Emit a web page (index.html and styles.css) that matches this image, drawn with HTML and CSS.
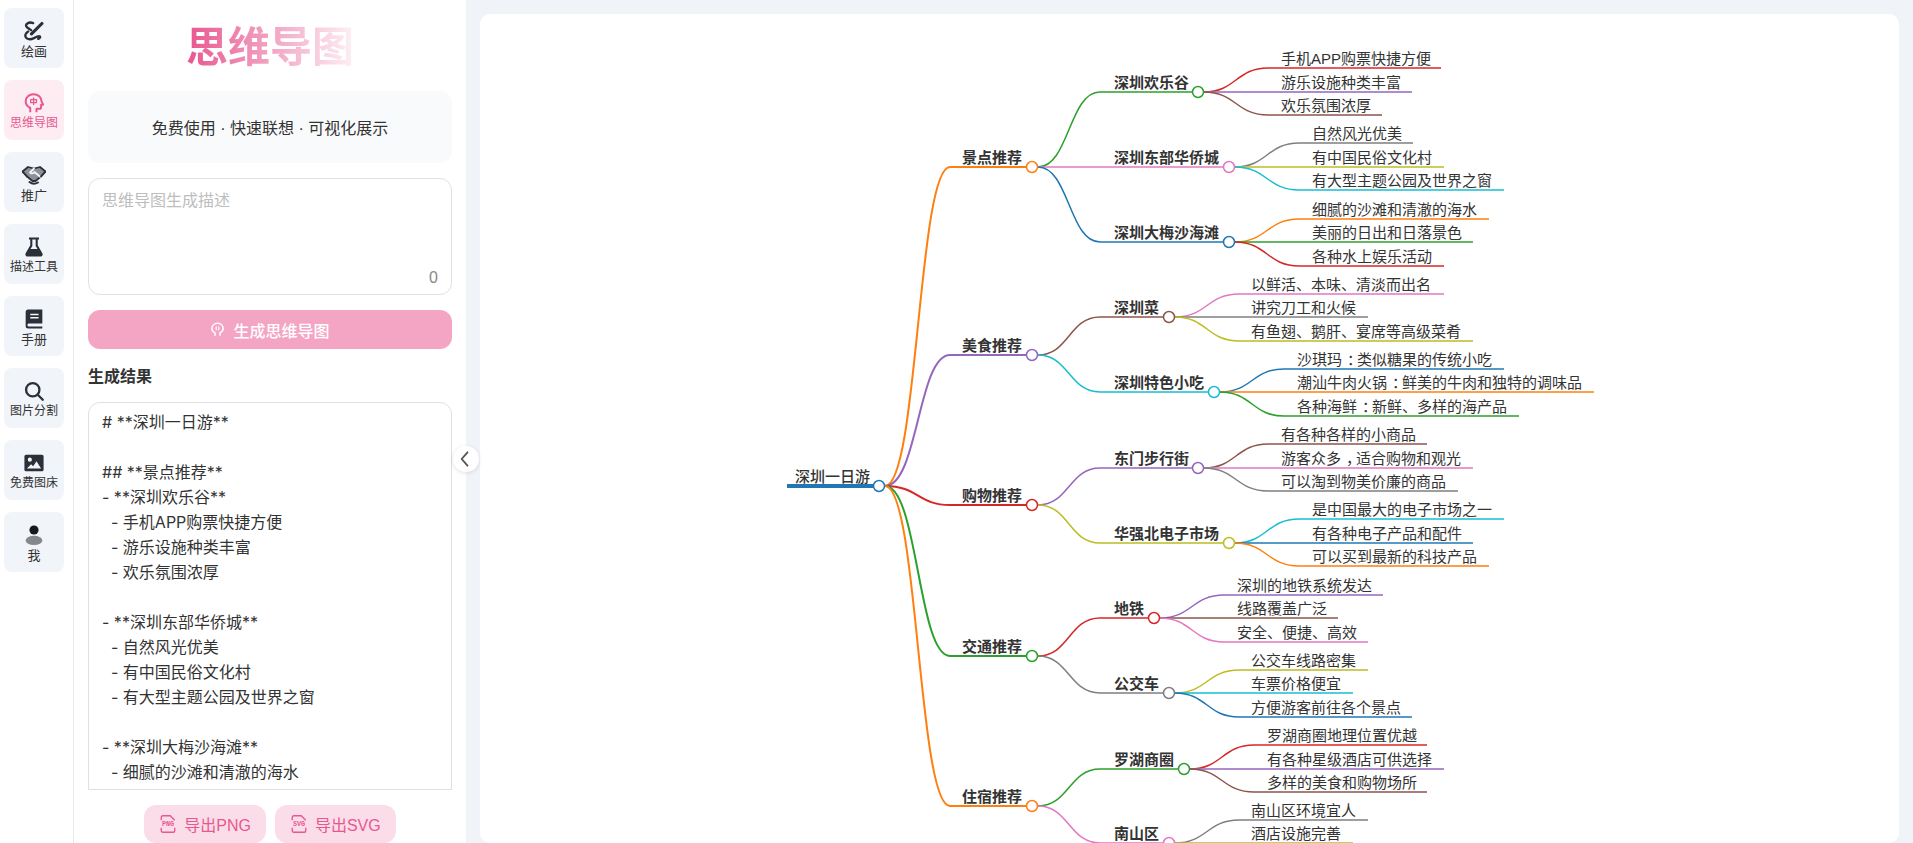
FILE: index.html
```html
<!DOCTYPE html>
<html lang="zh">
<head>
  <meta charset="utf-8">
  <title>思维导图</title>
  <link rel="stylesheet" href="styles.css">
</head>
<body>
  <nav class="nav">
    <a class="nav-item">
      <svg class="nav-icon" viewBox="0 0 24 24" fill="none" stroke="#2b2f38" stroke-width="2.8" stroke-linecap="round">
        <path d="M11 2.500C6 .5 0 4 3.500 7.500l5 3.500"/>
        <path d="M21.500 3L9 15.500" stroke-width="3.8"/>
        <path d="M5 12.500c-3.500 2-4.500 6-2 8s6 1.500 9 0 6-3 7-2-.5 2.500-2 3"/>
      </svg>
      <span class="nav-label">绘画</span>
    </a>
    <a class="nav-item active">
      <svg class="nav-icon" viewBox="0 0 24 24" fill="none" stroke="#e8578f" stroke-width="2.4" stroke-linejoin="round">
        <path d="M7.500 23v-5C4.500 16.500 2 14 2 10 2 5 6 1.500 11.500 1.500S21 5 21 10l2 4h-2.500v3a2 2 0 0 1-2 2H15v4"/>
        <path d="M11.500 5.500v9M8 8h7v3.500H8z" stroke-width="1.5"/>
      </svg>
      <span class="nav-label small">思维导图</span>
    </a>
    <a class="nav-item">
      <svg class="nav-icon wide" viewBox="0 2 24 20" fill="none" stroke="#2b2f38" stroke-width="1.8" stroke-linejoin="round" stroke-linecap="round">
        <path d="M.5 8.500L6 4l6 1.500L18 4l5.500 4.500L19 13.500 13.500 18h-3L5 13.500z" fill="#8d9096"/>
        <path d="M12 5.500L8 9.500c1.500 1.500 3.500 1 4.500-.5l6 5" stroke="#f1f4f9"/>
        <path d="M.5 8.500l4.500 5M23.500 8.500L19 13.500"/>
        <path d="M7.500 19c2.500 2 6 2 8.500.5" stroke-width="2"/>
      </svg>
      <span class="nav-label">推广</span>
    </a>
    <a class="nav-item">
      <svg class="nav-icon" viewBox="0 0 24 24">
        <path fill="#2b2f38" d="M6 .5h12V3h-1.500v7L22 19.500c1 2-.3 4-2.500 4h-15C2.300 23.500 1 21.500 2 19.500L7.500 10V3H6zM10 3v7.700L7.800 14.500h8.400L14 10.700V3z"/>
      </svg>
      <span class="nav-label small">描述工具</span>
    </a>
    <a class="nav-item">
      <svg class="nav-icon" viewBox="0 0 24 24">
        <path fill="#2b2f38" d="M5 .5h17v17H5.500a1.800 1.800 0 0 0 0 3.500H22v2.500H5a3 3 0 0 1-3-3v-17a3 3 0 0 1 3-3z"/>
        <path stroke="#f1f4f9" stroke-width="1.8" d="M7.500 6.500h10M7.500 10.500h10"/>
      </svg>
      <span class="nav-label">手册</span>
    </a>
    <a class="nav-item">
      <svg class="nav-icon" viewBox="0 0 24 24" fill="none" stroke="#2b2f38" stroke-width="2.8" stroke-linecap="round">
        <circle cx="10.500" cy="10.500" r="8"/>
        <path d="M16.500 16.500l6 6"/>
      </svg>
      <span class="nav-label small">图片分割</span>
    </a>
    <a class="nav-item">
      <svg class="nav-icon" viewBox="0 0 24 24">
        <path fill="#2b2f38" fill-rule="evenodd" d="M2.500 2h19a2 2 0 0 1 2 2v16a2 2 0 0 1-2 2h-19a2 2 0 0 1-2-2V4a2 2 0 0 1 2-2zM7 5.500a2.500 2.500 0 1 0 0 5 2.500 2.500 0 0 0 0-5zM3.500 18.500h17L15 10l-4 6-2.500-2.500z"/>
      </svg>
      <span class="nav-label small">免费图床</span>
    </a>
    <a class="nav-item">
      <svg class="nav-icon" viewBox="0 0 24 24">
        <circle cx="12" cy="6" r="5.5" fill="#17191e"/>
        <ellipse cx="12" cy="18.500" rx="10" ry="5.500" fill="#85878c"/>
      </svg>
      <span class="nav-label">我</span>
    </a>
  </nav>

  <aside class="panel">
    <h1 class="title"><span>思维导图</span></h1>
    <div class="tagline">免费使用 · 快速联想 · 可视化展示</div>

    <div class="prompt">
      <textarea class="prompt-input" placeholder="思维导图生成描述"></textarea>
      <span class="prompt-count">0</span>
    </div>

    <button class="generate">
      <svg class="generate-icon" viewBox="0 0 24 24" fill="none" stroke="#fff" stroke-width="2.4" stroke-linejoin="round">
        <path d="M8 22v-4.500C5 16 3 13.500 3 10.500 3 5.500 7 2 12 2s9 3.500 9 8.500c0 3-2 5.500-5 7V22"/>
        <path d="M10 7v6M14 7v6" stroke-width="1.8"/>
      </svg>
      <span>生成思维导图</span>
    </button>

    <h2 class="result-title">生成结果</h2>
    <div class="result"># **深圳一日游**

## **景点推荐**
- **深圳欢乐谷**
  - 手机APP购票快捷方便
  - 游乐设施种类丰富
  - 欢乐氛围浓厚

- **深圳东部华侨城**
  - 自然风光优美
  - 有中国民俗文化村
  - 有大型主题公园及世界之窗

- **深圳大梅沙海滩**
  - 细腻的沙滩和清澈的海水
  - 美丽的日出和日落景色</div>

    <div class="export">
      <button class="export-btn">
        <svg class="export-icon" viewBox="0 0 24 24" fill="none" stroke="#e8578f" stroke-width="1.8">
          <path d="M3 7V3a2 2 0 0 1 2-2h10l6 6M21 17v4a2 2 0 0 1-2 2H5a2 2 0 0 1-2-2v-4"/>
          <text class="export-icon-text" x="12" y="15">PNG</text>
        </svg>
        <span>导出PNG</span>
      </button>
      <button class="export-btn">
        <svg class="export-icon" viewBox="0 0 24 24" fill="none" stroke="#e8578f" stroke-width="1.8">
          <path d="M3 7V3a2 2 0 0 1 2-2h10l6 6M21 17v4a2 2 0 0 1-2 2H5a2 2 0 0 1-2-2v-4"/>
          <text class="export-icon-text" x="12" y="15">SVG</text>
        </svg>
        <span>导出SVG</span>
      </button>
    </div>

    <button class="collapse">
      <svg viewBox="0 0 24 24" width="20" height="20" fill="none" stroke="#555" stroke-width="2.2" stroke-linecap="round" stroke-linejoin="round">
        <path d="M15 4l-7 8 7 8"/>
      </svg>
    </button>
  </aside>

  <main class="main">
    <div class="canvas">
      <!-- viewBox uses page coordinates, canvas starts at 480,14 -->
      <svg class="mindmap" viewBox="480 14 1419 829" width="1419" height="829">
        <g class="links">
          <path class="s-blue root-line" d="M787 486H875"/>

          <path class="s-orange thick" d="M885 486C918 486 918 167 950 167H1026"/>
          <path class="s-purple thick" d="M885 486C918 486 918 355 950 355H1026"/>
          <path class="s-red thick" d="M885 486C918 486 918 505 950 505H1026"/>
          <path class="s-green thick" d="M885 486C918 486 918 656 950 656H1026"/>
          <path class="s-orange thick" d="M885 486C918 486 918 806 950 806H1026"/>

          <path class="s-green" d="M1038 167C1069 167 1069 92 1100 92H1192"/>
          <path class="s-pink" d="M1038 167H1223"/>
          <path class="s-blue" d="M1038 167C1069 167 1069 242 1100 242H1223"/>
          <path class="s-brown" d="M1038 355C1069 355 1069 317 1100 317H1163"/>
          <path class="s-cyan" d="M1038 355C1069 355 1069 392 1100 392H1208"/>
          <path class="s-purple" d="M1038 505C1069 505 1069 468 1100 468H1192"/>
          <path class="s-olive" d="M1038 505C1069 505 1069 543 1100 543H1223"/>
          <path class="s-red" d="M1038 656C1069 656 1069 618 1100 618H1148"/>
          <path class="s-gray" d="M1038 656C1069 656 1069 693 1100 693H1163"/>
          <path class="s-green" d="M1038 806C1069 806 1069 769 1100 769H1178"/>
          <path class="s-pink" d="M1038 806C1069 806 1069 843 1100 843H1163"/>

          <path class="s-red" d="M1204 92C1236 92 1236 68 1268 68H1441"/>
          <path class="s-purple" d="M1204 92H1412"/>
          <path class="s-brown" d="M1204 92C1236 92 1236 115 1268 115H1382"/>

          <path class="s-gray" d="M1235 167C1267 167 1267 143 1299 143H1413"/>
          <path class="s-olive" d="M1235 167H1444"/>
          <path class="s-cyan" d="M1235 167C1267 167 1267 190 1299 190H1504"/>

          <path class="s-orange" d="M1235 242C1267 242 1267 219 1299 219H1489"/>
          <path class="s-green" d="M1235 242H1473"/>
          <path class="s-red" d="M1235 242C1267 242 1267 266 1299 266H1444"/>

          <path class="s-pink" d="M1175 317C1207 317 1207 294 1239 294H1444"/>
          <path class="s-gray" d="M1175 317H1368"/>
          <path class="s-olive" d="M1175 317C1207 317 1207 341 1239 341H1473"/>

          <path class="s-blue" d="M1220 392C1252 392 1252 369 1284 369H1504"/>
          <path class="s-orange" d="M1220 392H1594"/>
          <path class="s-green" d="M1220 392C1252 392 1252 416 1284 416H1519"/>

          <path class="s-brown" d="M1204 468C1236 468 1236 444 1268 444H1427"/>
          <path class="s-pink" d="M1204 468H1473"/>
          <path class="s-gray" d="M1204 468C1236 468 1236 491 1268 491H1458"/>

          <path class="s-cyan" d="M1235 543C1267 543 1267 519 1299 519H1504"/>
          <path class="s-blue" d="M1235 543H1473"/>
          <path class="s-orange" d="M1235 543C1267 543 1267 566 1299 566H1489"/>

          <path class="s-purple" d="M1160 618C1192 618 1192 595 1224 595H1383"/>
          <path class="s-brown" d="M1160 618H1338"/>
          <path class="s-pink" d="M1160 618C1192 618 1192 642 1224 642H1368"/>

          <path class="s-olive" d="M1175 693C1207 693 1207 670 1239 670H1368"/>
          <path class="s-cyan" d="M1175 693H1353"/>
          <path class="s-blue" d="M1175 693C1207 693 1207 717 1239 717H1412"/>

          <path class="s-red" d="M1190 769C1222 769 1222 745 1254 745H1427"/>
          <path class="s-purple" d="M1190 769H1444"/>
          <path class="s-brown" d="M1190 769C1222 769 1222 792 1254 792H1427"/>

          <path class="s-gray" d="M1175 843C1207 843 1207 820 1239 820H1368"/>
          <path class="s-olive" d="M1175 843H1353"/>
        </g>

        <g class="dots">
          <circle class="s-blue" cx="879" cy="486" r="5.5"/>
          <circle class="s-orange" cx="1032" cy="167" r="5.5"/>
          <circle class="s-purple" cx="1032" cy="355" r="5.5"/>
          <circle class="s-red" cx="1032" cy="505" r="5.5"/>
          <circle class="s-green" cx="1032" cy="656" r="5.5"/>
          <circle class="s-orange" cx="1032" cy="806" r="5.5"/>
          <circle class="s-green" cx="1198" cy="92" r="5.5"/>
          <circle class="s-pink" cx="1229" cy="167" r="5.5"/>
          <circle class="s-blue" cx="1229" cy="242" r="5.5"/>
          <circle class="s-brown" cx="1169" cy="317" r="5.5"/>
          <circle class="s-cyan" cx="1214" cy="392" r="5.5"/>
          <circle class="s-purple" cx="1198" cy="468" r="5.5"/>
          <circle class="s-olive" cx="1229" cy="543" r="5.5"/>
          <circle class="s-red" cx="1154" cy="618" r="5.5"/>
          <circle class="s-gray" cx="1169" cy="693" r="5.5"/>
          <circle class="s-green" cx="1184" cy="769" r="5.5"/>
          <circle class="s-pink" cx="1169" cy="843" r="5.5"/>
        </g>

        <g class="labels">
          <text class="root-label" x="795" y="482">深圳一日游</text>
        </g>

        <g class="labels strong">
          <text x="962" y="163">景点推荐</text>
          <text x="962" y="351">美食推荐</text>
          <text x="962" y="501">购物推荐</text>
          <text x="962" y="652">交通推荐</text>
          <text x="962" y="802">住宿推荐</text>
          <text x="1114" y="88">深圳欢乐谷</text>
          <text x="1114" y="163">深圳东部华侨城</text>
          <text x="1114" y="238">深圳大梅沙海滩</text>
          <text x="1114" y="313">深圳菜</text>
          <text x="1114" y="388">深圳特色小吃</text>
          <text x="1114" y="464">东门步行街</text>
          <text x="1114" y="539">华强北电子市场</text>
          <text x="1114" y="614">地铁</text>
          <text x="1114" y="689">公交车</text>
          <text x="1114" y="765">罗湖商圈</text>
          <text x="1114" y="839">南山区</text>
        </g>

        <g class="labels">
          <text x="1281" y="64">手机APP购票快捷方便</text>
          <text x="1281" y="88">游乐设施种类丰富</text>
          <text x="1281" y="111">欢乐氛围浓厚</text>
          <text x="1312" y="139">自然风光优美</text>
          <text x="1312" y="163">有中国民俗文化村</text>
          <text x="1312" y="186">有大型主题公园及世界之窗</text>
          <text x="1312" y="215">细腻的沙滩和清澈的海水</text>
          <text x="1312" y="238">美丽的日出和日落景色</text>
          <text x="1312" y="262">各种水上娱乐活动</text>
          <text x="1251" y="290">以鲜活、本味、清淡而出名</text>
          <text x="1251" y="313">讲究刀工和火候</text>
          <text x="1251" y="337">有鱼翅、鹅肝、宴席等高级菜肴</text>
          <text x="1297" y="365">沙琪玛<tspan dx="5">：</tspan><tspan dx="-5">类似糖果的传统小吃</tspan></text>
          <text x="1297" y="388">潮汕牛肉火锅<tspan dx="5">：</tspan><tspan dx="-5">鲜美的牛肉和独特的调味品</tspan></text>
          <text x="1297" y="412">各种海鲜<tspan dx="5">：</tspan><tspan dx="-5">新鲜、多样的海产品</tspan></text>
          <text x="1281" y="440">有各种各样的小商品</text>
          <text x="1281" y="464">游客众多<tspan dx="5">，</tspan><tspan dx="-5">适合购物和观光</tspan></text>
          <text x="1281" y="487">可以淘到物美价廉的商品</text>
          <text x="1312" y="515">是中国最大的电子市场之一</text>
          <text x="1312" y="539">有各种电子产品和配件</text>
          <text x="1312" y="562">可以买到最新的科技产品</text>
          <text x="1237" y="591">深圳的地铁系统发达</text>
          <text x="1237" y="614">线路覆盖广泛</text>
          <text x="1237" y="638">安全、便捷、高效</text>
          <text x="1251" y="666">公交车线路密集</text>
          <text x="1251" y="689">车票价格便宜</text>
          <text x="1251" y="713">方便游客前往各个景点</text>
          <text x="1267" y="741">罗湖商圈地理位置优越</text>
          <text x="1267" y="765">有各种星级酒店可供选择</text>
          <text x="1267" y="788">多样的美食和购物场所</text>
          <text x="1251" y="816">南山区环境宜人</text>
          <text x="1251" y="839">酒店设施完善</text>
        </g>
      </svg>
    </div>
  </main>
</body>
</html>
```

FILE: styles.css
```css
* { box-sizing: border-box; }

html, body {
  height: 100%;
  margin: 0;
}
body {
  display: flex;
  overflow: hidden;
  background: #f0f4f9;
  color: #333;
  font-family: "Liberation Sans", "Noto Sans CJK SC", sans-serif;
}

/* left icon rail */
.nav {
  flex: 0 0 74px;
  display: flex;
  flex-direction: column;
  gap: 12px;
  padding: 8px 4px;
  background: #fff;
  border-right: 1px solid #e6e8ec;
}
.nav-item {
  width: 60px;
  height: 60px;
  display: flex;
  flex-direction: column;
  align-items: center;
  justify-content: center;
  gap: 2px;
  padding-top: 4px;
  border-radius: 8px;
  background: #f1f4f9;
  color: #333;
}
.nav-item.active {
  background: #fdedf3;
  color: #e8578f;
}
.nav-icon {
  width: 20px;
  height: 20px;
}
.nav-icon.wide { width: 24px; }
.nav-label {
  font-size: 13px;
  line-height: 17px;
}
.nav-label.small { font-size: 12px; }

/* generator panel */
.panel {
  position: relative;
  flex: 0 0 392px;
  display: flex;
  flex-direction: column;
  padding: 0 14px;
  background: #fff;
}
.title {
  margin: 19px 0 14px;
  height: 58px;
  font-size: 42px;
  line-height: 58px;
  font-weight: 700;
  text-align: center;
}
.title span {
  background: linear-gradient(90deg, #e8568f, #fdf0f5);
  -webkit-background-clip: text;
  background-clip: text;
  color: transparent;
}
.tagline {
  height: 72px;
  border-radius: 12px;
  background: #f9fafc;
  font-size: 16px;
  line-height: 76px;
  text-align: center;
}
.prompt {
  position: relative;
  height: 117px;
  margin-top: 15px;
}
.prompt-input {
  display: block;
  width: 100%;
  height: 100%;
  padding: 11px 13px;
  resize: none;
  border: 1px solid #e0e2e6;
  border-radius: 12px;
  outline: none;
  font: inherit;
  font-size: 16px;
  line-height: 22px;
}
.prompt-input::placeholder { color: #bdbdbd; }
.prompt-count {
  position: absolute;
  right: 14px;
  bottom: 8px;
  color: #888;
  font-size: 16px;
}
.generate {
  height: 39px;
  margin-top: 15px;
  display: flex;
  align-items: center;
  justify-content: center;
  gap: 8px;
  border: 0;
  border-radius: 12px;
  background: #f4a5c3;
  color: #fff;
  font: inherit;
  font-size: 16px;
  font-weight: 500;
}
.generate-icon {
  width: 15px;
  height: 15px;
}
.result-title {
  margin: 16px 0 13px;
  font-size: 16px;
  line-height: 24px;
  font-weight: 700;
}
.result {
  flex: 1;
  min-height: 0;
  overflow: hidden;
  padding: 7px 13px;
  border: 1px solid #dcdfe4;
  border-radius: 12px 12px 0 0;
  font-family: Inter, "Noto Sans CJK SC", sans-serif;
  font-size: 16px;
  line-height: 25px;
  white-space: pre-wrap;
}
.export {
  display: flex;
  justify-content: center;
  gap: 9px;
  margin-top: 15px;
}
.export-btn {
  height: 38px;
  display: flex;
  align-items: center;
  gap: 7px;
  padding: 0 15px;
  border: 0;
  border-radius: 12px;
  background: #fbdde9;
  color: #e8578f;
  font: inherit;
  font-size: 16px;
}
.export-icon {
  width: 18px;
  height: 18px;
}
.export-icon-text {
  fill: #e8578f;
  stroke: none;
  font-family: "Liberation Mono", monospace;
  font-size: 9px;
  font-weight: 700;
  text-anchor: middle;
}
.collapse {
  position: absolute;
  top: 446px;
  right: -13px;
  width: 26px;
  height: 26px;
  display: flex;
  align-items: center;
  justify-content: center;
  padding: 0 2px 0 0;
  border: 0;
  border-radius: 50%;
  background: #fff;
  box-shadow: 0 1px 4px rgba(0,0,0,0.12);
}

/* mind map */
.main {
  flex: 1;
  min-width: 0;
  padding: 14px 14px 0;
}
.canvas {
  height: 100%;
  overflow: hidden;
  border-radius: 10px;
  background: #fff;
}
.mindmap { display: block; }
.links path {
  fill: none;
  stroke-width: 1.5;
}
.links .thick { stroke-width: 2; }
.links .root-line { stroke-width: 4; }
.dots circle {
  fill: #fff;
  stroke-width: 1.5;
}
.labels text {
  fill: #333;
  font-size: 15px;
}
.labels.strong text { font-weight: 700; }
.labels .root-label { font-weight: 500; }

.s-blue { stroke: #1f77b4; }
.s-orange { stroke: #ff7f0e; }
.s-green { stroke: #2ca02c; }
.s-red { stroke: #d62728; }
.s-purple { stroke: #9467bd; }
.s-brown { stroke: #8c564b; }
.s-pink { stroke: #e377c2; }
.s-gray { stroke: #7f7f7f; }
.s-olive { stroke: #bcbd22; }
.s-cyan { stroke: #17becf; }
```
